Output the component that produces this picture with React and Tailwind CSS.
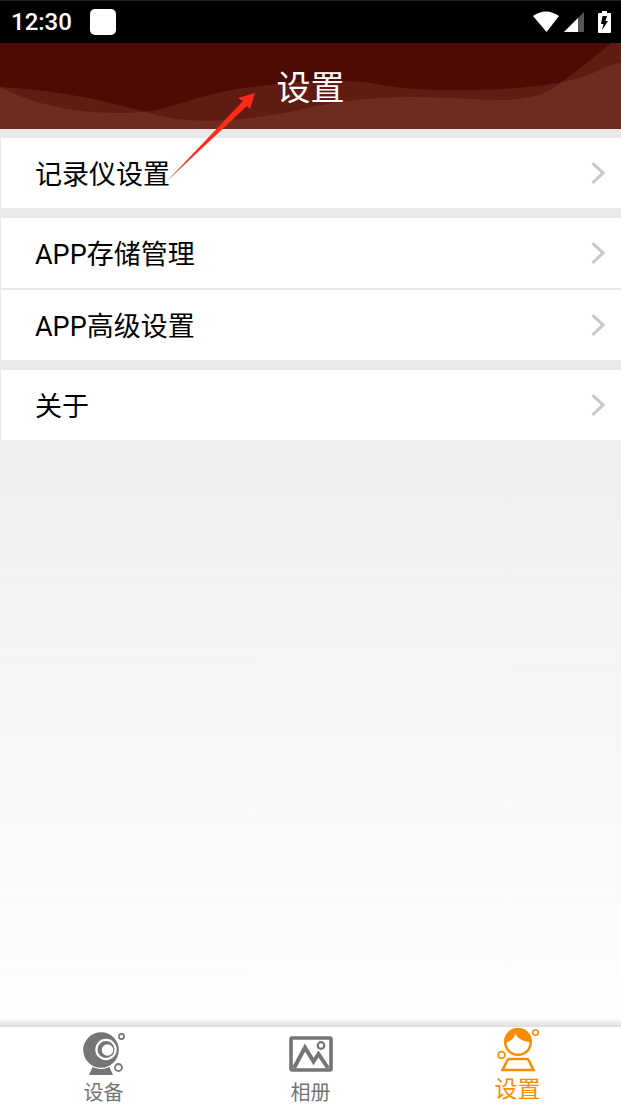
import React, { useState } from 'react';

const groups = [
  ['记录仪设置'],
  ['APP存储管理', 'APP高级设置'],
  ['关于'],
];

const WebcamIcon = () => (
  <svg className="w-11 h-11" viewBox="0 0 44 44" fill="none">
    <path d="M7 43 L11 34 Q19 40 27 34 L31 43 Z" fill="#757575" />
    <circle cx="19" cy="18" r="19" fill="#fff" />
    <circle cx="19" cy="18" r="17.8" fill="#757575" />
    <circle cx="24" cy="17.500" r="9.6" stroke="#fff" strokeWidth="2.2" />
    <circle cx="25.500" cy="18" r="5.8" fill="#fff" />
    <circle cx="39.5" cy="4.5" r="2.6" stroke="#757575" strokeWidth="1.6" />
    <circle cx="36.5" cy="35.5" r="3.5" stroke="#757575" strokeWidth="1.8" />
  </svg>
);

const AlbumIcon = () => (
  <svg className="w-11 h-11" viewBox="0 0 44 44" fill="none" stroke="#757575">
    <rect x="2" y="6" width="40" height="32" rx="1" strokeWidth="3.6" />
    <path d="M5 36 L16 15.5 L24.5 29.5 L29.5 22 L39 36" strokeWidth="4" />
    <circle cx="32" cy="13.5" r="3.3" strokeWidth="2.2" />
  </svg>
);

const PersonIcon = () => (
  <svg className="w-11 h-11" viewBox="0 0 44 44" fill="none">
    <circle cx="22" cy="14" r="12.8" stroke="#fb8c00" strokeWidth="2.4" />
    <path
      d="M8.5 16 C8 6 14 0 22 0 C30 0 36 6 35.5 16 L33 14 C26 13 21 10 19 5 C19 10 15 13 11 14 Z"
      fill="#fb8c00"
    />
    <path d="M13 31 H31 Q32 31 32.5 32 L37.5 42 H6.5 L11.5 32 Q12 31 13 31 Z" stroke="#fb8c00" strokeWidth="2.6" />
    <circle cx="39.5" cy="4.5" r="2.7" stroke="#fb8c00" strokeWidth="1.6" />
    <circle cx="5.5" cy="27" r="3.4" stroke="#fb8c00" strokeWidth="1.8" />
  </svg>
);

const tabs = [
  { id: 'device', label: '设备', icon: WebcamIcon },
  { id: 'album', label: '相册', icon: AlbumIcon },
  { id: 'settings', label: '设置', icon: PersonIcon },
];

const StatusBar = () => (
  <div className="h-[43px] bg-black border-t border-[#22242a] flex items-center justify-between pl-[11px] pr-[10px] text-white">
    <div className="flex items-center gap-[18px]">
      <span className="text-[24px] leading-none font-medium">12:30</span>
      <span className="w-[26px] h-[26px] rounded-[5px] bg-white"></span>
    </div>
    <div className="flex items-center">
      <svg width="26" height="22" viewBox="0 0 26 22" fill="#fff">
        <path d="M0 5 Q13 -4 26 5 L13.500 21 Z" />
      </svg>
      <svg className="ml-[5px]" width="20" height="22" viewBox="0 0 20 22">
        <path d="M20 1 V21 H0 Z" fill="#555" />
        <path d="M14 7 V21 H0 Z" fill="#fff" />
      </svg>
      <svg className="ml-[14px]" width="13" height="24" viewBox="0 0 13 24">
        <path d="M4 1 H9 V3 H12 Q13 3 13 4 V22 Q13 23 12 23 H1 Q0 23 0 22 V4 Q0 3 1 3 H4 Z" fill="#fff" />
        <path d="M4.500 6 H9 L7.500 11 H10 L4 20 L5.500 14 H3 Z" fill="#000" />
      </svg>
    </div>
  </div>
);

const Header = () => (
  <header className="relative h-[86px] bg-[#4e0a04] flex items-center justify-center">
    <svg
      className="absolute inset-0 w-full h-full"
      viewBox="0 0 621 86"
      preserveAspectRatio="none"
      fill="#f2ae8c"
      fillOpacity="0.11"
    >
      <path d="M0 44 C60 47 100 57 146 69 C170 77 195 79 225 77 C255 75 275 72 295 68 C325 60 370 54 410 54 C450 54 470 57 505 57 C535 56 550 49 562 39 L612 0 H621 V86 H0 Z" />
      <path d="M0 44 C35 62 75 70 120 70 C175 70 190 50 260 43 C290 39 325 36 365 39 C390 43 400 46 440 47 C500 48 545 44 575 36 C595 31 605 23 621 20 V86 H0 Z" />
    </svg>
    <h1 className="relative pt-1 text-[34px] leading-none text-white">设置</h1>
    {/* red arrow running from the first row up to the title */}
    <svg
      className="absolute top-[50px] left-[167px] z-10 pointer-events-none"
      width="88"
      height="88"
      viewBox="0 0 88 88"
      fill="#ff2a18"
    >
      <path d="M88 0 L71 5 L76 8 L0 88 L80 13 L83 16 Z" />
    </svg>
  </header>
);

const App = () => {
  const [activeTab, setActiveTab] = useState('settings');

  return (
    <div className="min-h-screen flex flex-col font-[Roboto,'Noto_Sans_CJK_SC',sans-serif]">
      <StatusBar />
      <Header />

      <main className="grow flex flex-col">
        <div className="bg-[#e9e9e9] pt-[9px] pl-px flex flex-col gap-[10px]">
          {groups.map((items) => (
            <div key={items[0]} className="flex flex-col gap-[2px]">
              {items.map((item) => (
                <button
                  key={item}
                  className="w-full h-[70px] bg-white flex items-center justify-between pl-[34px] pr-4"
                >
                  <span className="pt-1 text-[27px] leading-none text-black">{item}</span>
                  <svg
                    width="14"
                    height="24"
                    viewBox="0 0 14 24"
                    fill="none"
                    stroke="#c7c7cc"
                    strokeWidth="3"
                  >
                    <path d="M1.500 2 L12 12 L1.500 22" />
                  </svg>
                </button>
              ))}
            </div>
          ))}
        </div>
        <div className="grow bg-linear-to-b from-[#efefef] to-[#fefefe]"></div>
      </main>

      <div className="h-[7px] bg-linear-to-b from-[#f6f6f6] to-[#dcdcdc]"></div>
      <nav className="h-[78px] grid grid-cols-3 bg-white">
        {tabs.map((tab) => {
          const Icon = tab.icon;
          const active = tab.id === activeTab;
          return (
            <button
              key={tab.id}
              onClick={() => setActiveTab(tab.id)}
              className={`flex flex-col items-center ${active ? "pt-px gap-[6px] text-[23px] text-[#fb8c00]" : "pt-[5px] gap-[7px] text-[20px] text-[#757575]"}`}
            >
              <Icon />
              <span className="leading-none">{tab.label}</span>
            </button>
          );
        })}
      </nav>
    </div>
  );
};

export default App;
